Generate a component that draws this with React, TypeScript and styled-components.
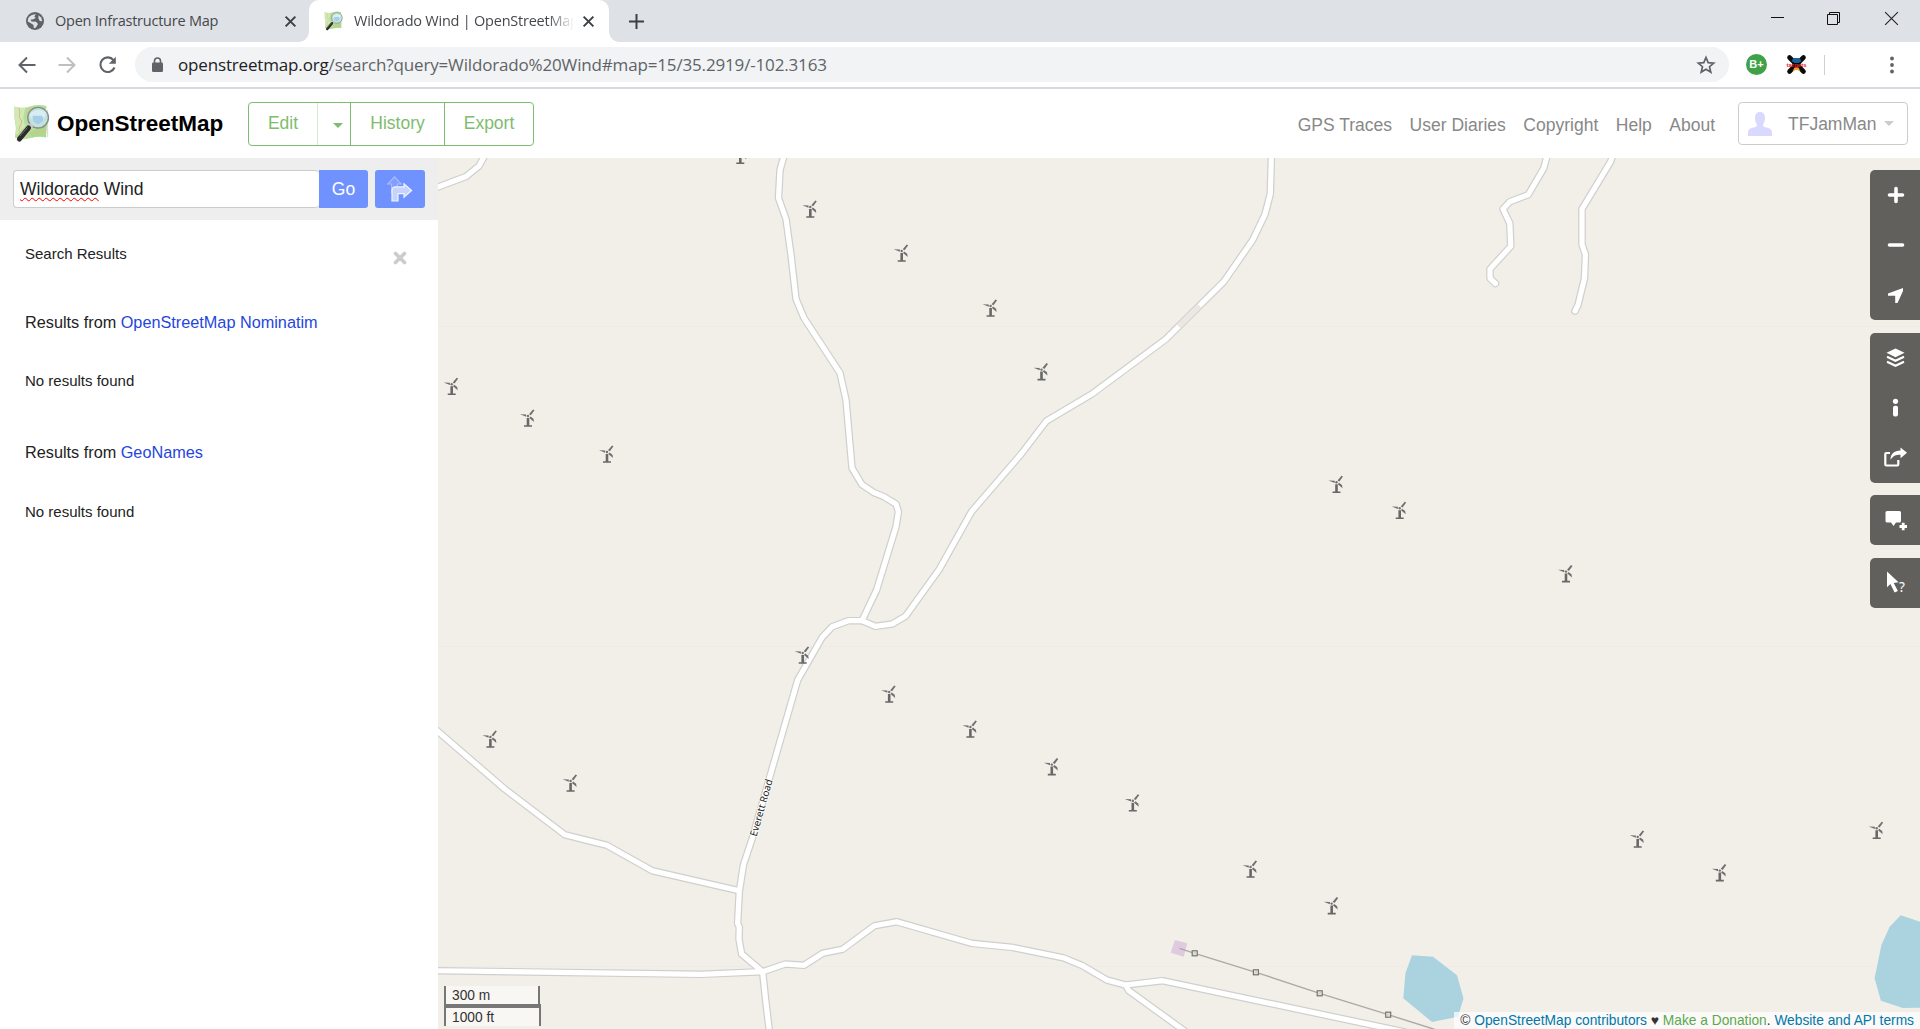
import React from "react";
import styled, { createGlobalStyle, css } from "styled-components";

const arial = `Arial, "Liberation Sans", sans-serif`;
const chrome = `"Open Sans", "Noto Sans", sans-serif`;

const GlobalStyle = createGlobalStyle`
  * { box-sizing: border-box; }
  html, body { margin: 0; padding: 0; overflow: hidden; background: #fff; }
  svg { display: block; flex: none; }
  a { text-decoration: none; }
`;

const Window = styled.div`
  width: 1920px;
  height: 1029px;
  display: flex;
  flex-direction: column;
  overflow: hidden;
  font-family: ${arial};
  color: #222;
`;

/* ---------- browser chrome ---------- */

const TabStrip = styled.div`
  height: 42px;
  flex: none;
  display: flex;
  background: #dee1e6;
`;

const Tab = styled.div<{ $active?: boolean }>`
  width: ${p => (p.$active ? 300 : 309)}px;
  height: 42px;
  padding: 0 ${p => (p.$active ? 14 : 12)}px 0 ${p => (p.$active ? 15 : 26)}px;
  display: flex;
  align-items: center;
  position: relative;
  border-radius: 10px 10px 0 0;
  background: ${p => (p.$active ? "#fff" : "transparent")};
  ${p =>
    p.$active &&
    css`
      &::before,
      &::after {
        content: "";
        position: absolute;
        bottom: 0;
        width: 10px;
        height: 10px;
      }
      &::before {
        left: -10px;
        background: radial-gradient(circle at 0 0, transparent 9.5px, #fff 10px);
      }
      &::after {
        right: -10px;
        background: radial-gradient(circle at 100% 0, transparent 9.5px, #fff 10px);
      }
    `}
`;

const TabTitle = styled.span<{ $width: number; $fade?: boolean }>`
  width: ${p => p.$width}px;
  margin-left: 11px;
  margin-right: auto;
  overflow: hidden;
  white-space: nowrap;
  font: 14.5px/20px ${chrome};
  letter-spacing: -0.23px;
  color: #45484c;
  ${p => p.$fade && "mask-image: linear-gradient(90deg, #000 88%, transparent 100%);"}
`;

const NewTab = styled.div`
  width: 54px;
  display: flex;
  align-items: center;
  justify-content: center;
`;

const WindowButtons = styled.div`
  margin-left: auto;
  display: flex;
  height: 37px;
`;

const WindowButton = styled.div`
  width: 57px;
  display: flex;
  align-items: center;
  justify-content: center;
`;

const Toolbar = styled.div`
  height: 47px;
  flex: none;
  display: flex;
  align-items: center;
  padding: 0 18px;
  background: #fff;
  border-bottom: 2px solid #d8d9df;
`;

const NavIcons = styled.div`
  width: 117px;
  display: flex;
  gap: 22px;
`;

const Omnibox = styled.div`
  width: 1594px;
  height: 35px;
  border-radius: 18px;
  background: #f1f3f4;
  display: flex;
  align-items: center;
  padding: 0 13px 0 16px;
`;

const Url = styled.span`
  margin-left: 14px;
  margin-right: auto;
  font: 17px/24px ${chrome};
  letter-spacing: -0.16px;
  color: #5f6368;
  white-space: nowrap;
  b { font-weight: 400; color: #202124; }
`;

const Extensions = styled.div`
  display: flex;
  align-items: center;
  margin-left: 17px;
  flex: 1;
  gap: 19px;
`;

const BadgeIcon = styled.span`
  width: 21px;
  height: 21px;
  border-radius: 50%;
  background: #3fa148;
  color: #fff;
  font: 700 11px/21px ${arial};
  text-align: center;
`;

const ToolbarRule = styled.span`
  width: 1px;
  height: 20px;
  margin-left: -2px;
  background: #cfd1d4;
`;

const MenuSlot = styled.span`
  margin-left: auto;
  padding-right: 8px;
`;

/* ---------- site header ---------- */

const Header = styled.header`
  height: 69px;
  flex: none;
  display: flex;
  align-items: center;
  padding: 0 12px 0 13px;
`;

const SiteName = styled.h1`
  margin: 0 0 0 7px;
  width: 191px;
  font: 700 22.5px/28px ${arial};
  color: #000;
`;

const ButtonGroup = styled.div`
  display: flex;
  height: 44px;
  width: 286px;
  border: 1px solid #7ebc6f;
  border-radius: 4px;
`;

const GroupButton = styled.a<{ $width: number; $rule?: string; $shift?: number }>`
  width: ${p => p.$width}px;
  display: flex;
  align-items: center;
  justify-content: center;
  padding-left: ${p => p.$shift || 0}px;
  font-size: 17.5px;
  color: #7ebc6f;
  border-right: ${p => (p.$rule ? `1px solid ${p.$rule}` : "0")};
`;

const Caret = styled.span<{ $color: string; $top?: number }>`
  border: 5px solid transparent;
  border-bottom: 0;
  border-top-color: ${p => p.$color};
  margin-top: ${p => p.$top || 0}px;
`;

const SecondaryNav = styled.nav`
  margin-left: auto;
  display: flex;
  gap: 17.5px;
  padding-top: 3px;
  font-size: 17.5px;
  color: #888;
`;

const UserMenu = styled.div`
  margin-left: 23px;
  width: 170px;
  height: 43px;
  border: 1px solid #ccc;
  border-radius: 4px;
  display: flex;
  align-items: center;
  padding: 0 13px 0 9px;
  font-size: 17.5px;
  color: #888;
  span:first-of-type { margin: 1px auto 0 16px; }
`;

/* ---------- content ---------- */

const Content = styled.main`
  flex: 1;
  display: flex;
  min-height: 0;
`;

const Sidebar = styled.aside`
  width: 438px;
  flex: none;
  background: #fff;
`;

const SearchForm = styled.div`
  height: 62px;
  padding: 12px 0 12px 13px;
  display: flex;
  background: #eee;
`;

const SearchInput = styled.div`
  width: 306px;
  flex: none;
  height: 38px;
  padding-left: 6px;
  border: 1px solid #ccc;
  border-right: 0;
  border-radius: 4px;
  background: #fff;
  font-size: 17.5px;
  line-height: 36px;
`;

const Misspelled = styled.span`
  text-decoration: underline wavy #f00 1.3px;
  text-underline-offset: 2px;
  text-decoration-skip-ink: none;
`;

const BlueButton = styled.div<{ $width: number; $joined?: boolean }>`
  width: ${p => p.$width}px;
  flex: none;
  height: 38px;
  margin-right: 7px;
  border-radius: ${p => (p.$joined ? "0 3px 3px 0" : "3px")};
  background: #7092ff;
  color: #fff;
  font-size: 17.5px;
  display: flex;
  align-items: center;
  justify-content: center;
`;

const Results = styled.div`
  padding: 23.5px 25px;
  display: flex;
  flex-direction: column;
`;

const ResultsHead = styled.div`
  display: flex;
  justify-content: space-between;
  height: 68px;
  padding-right: 6px;
  font-size: 15px;
  line-height: 20px;
  svg { margin-top: 7px; }
`;

const Source = styled.h4`
  margin: 0;
  height: 59.5px;
  font: 400 16.25px/20px ${arial};
  a { color: #2446de; }
`;

const Empty = styled.p`
  margin: 0;
  height: 71.3px;
  font-size: 15px;
  line-height: 20px;
`;

const MapPanel = styled.section`
  flex: 1;
  position: relative;
  background: #f2efe9;
  overflow: hidden;
`;

const Controls = styled.div`
  position: absolute;
  top: 12px;
  right: 0;
  width: 50px;
  display: flex;
  flex-direction: column;
  gap: 12.5px;
`;

const ControlGroup = styled.div`
  border-radius: 5px 0 0 5px;
  background: #61605c;
  overflow: hidden;
`;

const Control = styled.div`
  height: 50px;
  display: flex;
  align-items: center;
  justify-content: center;
  padding-left: 2px;
`;

const ScaleBox = styled.div`
  position: absolute;
  left: 6px;
  bottom: 3px;
  font-size: 13.75px;
  color: #333;
`;

const ScaleLine = styled.div<{ $width: number; $second?: boolean }>`
  width: ${p => p.$width}px;
  height: ${p => (p.$second ? 22 : 21)}px;
  margin-top: ${p => (p.$second ? -3 : 0)}px;
  padding-left: 6px;
  line-height: 19px;
  border: 2.5px solid #777;
  ${p => (p.$second ? "border-bottom: 0; border-top-width: 4px;" : "border-top: 0;")}
  background: rgba(255, 255, 255, 0.5);
`;

const Attribution = styled.div`
  position: absolute;
  right: 0;
  bottom: 0;
  height: 17px;
  padding: 0 6px;
  background: rgba(255, 255, 255, 0.7);
  font-size: 13.75px;
  line-height: 18px;
  color: #333;
  white-space: nowrap;
  a { color: #0078a8; }
  a.donate { color: #5ba94e; }
`;

/* ---------- drawings ---------- */

const OsmLogo = ({ w, h }: { w: number; h: number }) => (
  <svg width={w} height={h} viewBox="0 0 38 40">
    <path d="M1.500 2.500q8 2.500 16 0t17-.5l-1 9 1.500 10-1 13.500q-7-2-15.500.5T2 34.500l1-10-1.500-11z" fill="#b5dd9c" />
    <path d="M1.500 2.500q6 2.500 11 1.500l-2 10 2 9-9.500 9 .5-8-2-10.500z" fill="#cfeab4" />
    <path d="M24 25l10-2-.5 11q-7-2-14 .5l-2-4z" fill="#a9d98d" />
    <path d="M6 4c3 6-2 8 2 12s-5 8-1 13M17 30c4-3 6 1 9-1s5 0 8-3M18 4l-4 6" fill="none" stroke="#e3b98f" strokeWidth="1.100" />
    <path d="M35.500 6v28" stroke="#dcdedb" strokeWidth="1.200" />
    <circle cx="25.800" cy="14" r="10.600" fill="#c3e2dc" stroke="#858d8a" strokeWidth="1.400" />
    <path d="M17.500 9.500q8-6 16.500-1l-1 5-15 1z" fill="#d8edf1" />
    <path d="M20 12h10l1 5-5 4-5-3z" fill="#a6cdea" />
    <path d="M15.500 21.500l2.500-2 3.200 3-2.200 2.200z" fill="#c9c9c9" />
    <path d="M16 24.500L6.500 36" stroke="#2c2a2a" strokeWidth="5" strokeLinecap="round" />
    <path d="M15 24L7 33" stroke="#77706e" strokeWidth="1" />
  </svg>
);

const Cross = ({ size, color, weight }: { size: number; color: string; weight: number }) => (
  <svg width={size} height={size} viewBox="0 0 12 12">
    <path d="M1.500 1.500l9 9M10.500 1.500l-9 9" stroke={color} strokeWidth={weight} />
  </svg>
);

const Globe = () => (
  <svg width="18" height="18" viewBox="0 0 18 18">
    <circle cx="9" cy="9" r="9" fill="#5f6368" />
    <path d="M3.200 4.800Q6 1.800 9.800 2.200L8.300 4.500l1.400 1.300L7.500 7.300l-3 .4 1 1.800 4.500.3 2 2.200-1.500 2.500Q9.500 16.500 7.800 16L7.500 13 4.500 11 1.800 9.500Q1.500 6.800 3.200 4.800z" fill="#dee1e6" />
    <path d="M12.500 3.200l2.700 2.300 1 3.700-2.400-.2-1.300-2.500z" fill="#dee1e6" />
  </svg>
);

const Arrow = ({ color, flip }: { color: string; flip?: boolean }) => (
  <svg width="18" height="18" viewBox="0 0 18 18">
    <path d={flip ? "M.5 9H16M9 1.500L16.500 9 9 16.500" : "M17.500 9H2M9 1.500L1.500 9 9 16.500"} fill="none" stroke={color} strokeWidth="2" />
  </svg>
);

const Reload = () => (
  <svg width="20" height="18" viewBox="0 0 20 18">
    <path d="M15.500 4.200A7.300 7.300 0 1 0 16.500 11.500" fill="none" stroke="#5f6368" strokeWidth="2.100" />
    <path d="M17.800 .800v7h-7z" fill="#5f6368" />
  </svg>
);

const Lock = () => (
  <svg width="13" height="16" viewBox="0 0 13 16">
    <path d="M3.500 6V4a3 3 0 0 1 6 0v2" fill="none" stroke="#5f6368" strokeWidth="1.600" />
    <rect x="1" y="5.500" width="11" height="9.500" rx="1.300" fill="#5f6368" />
  </svg>
);

const Star = () => (
  <svg width="20" height="20" viewBox="0 0 20 20">
    <path d="M10 2.500l2.200 5.100 5.500.5-4.200 3.600 1.300 5.400L10 14.200l-4.800 2.900 1.300-5.400L2.300 8.100l5.500-.5z" fill="none" stroke="#5f6368" strokeWidth="1.700" />
  </svg>
);

const TargetIcon = () => (
  <svg width="21" height="21" viewBox="0 0 21 21">
    <path d="M3.500 3.500l14 14M17.500 3.500l-14 14" stroke="#0b0b0b" strokeWidth="4.600" strokeLinecap="round" />
    <path d="M6.500 7.500h8v6h-8z" fill="#0b0b0b" />
    <path d="M7.500 4h6l2 3.200L12.500 9h-4L5.500 7z" fill="#1a5f96" />
    <path d="M6.500 17.500l2-4h4l2 4-3-1.500h-2z" fill="#f1a32b" />
    <text x="10.500" y="12.600" fontFamily="Liberation Sans" fontWeight="700" fontSize="6" fill="#e8202b" textAnchor="middle">targets</text>
  </svg>
);

const Dots = () => (
  <svg width="4" height="18" viewBox="0 0 4 18" fill="#5f6368">
    <circle cx="2" cy="2.500" r="1.900" />
    <circle cx="2" cy="9" r="1.900" />
    <circle cx="2" cy="15.500" r="1.900" />
  </svg>
);

const Avatar = () => (
  <svg width="24" height="24" viewBox="0 0 24 24">
    <path d="M12 0c3.500 0 5 2.500 5 6 0 3-.8 5-2 6.500 0 1.500.5 2.300 2 2.700 4 .5 7 1.500 7 5.500V24H0v-3.300c0-4 3-5 7-5.500 1.500-.4 2-1.200 2-2.700C7.800 11 7 9 7 6c0-3.500 1.500-6 5-6z" fill="#d9d9ff" />
  </svg>
);

const Directions = () => (
  <svg width="26" height="26" viewBox="0 0 26 26">
    <path d="M4.600 17V8H.8L7.500.8 14.200 8H10.400v3" fill="#829fff" stroke="#a9bcff" strokeWidth="1.100" />
    <path d="M5 25V14.500q0-3.700 3.700-3.700H17V7.800l7.600 6.700L17 21.100v-3.500h-6V25z" fill="#c6d3ff" stroke="#f0f4ff" strokeWidth="1.200" />
  </svg>
);

const Pane = ({ children }: { children: React.ReactNode }) => (
  <svg width="24" height="24" viewBox="0 0 24 24" fill="#fff">{children}</svg>
);

const roads = {
  northWest: "438,187 466,176.500 479,166 485,155",
  north: "785,152 780,170 778.500,198 786,219 791,255 796,299 804,318 840,373 846,400 852,468 862,484.700 874,492.700 884,496.700 896,504 898.400,511.700 896,526.700 876.600,590 862,620.700",
  everett: "1271.500,152 1270.300,194 1265,214.300 1252.900,239.700 1223.800,281.700 1165.600,339.300 1091.500,394.300 1046.400,421 1021.200,454 971.500,511.700 939.300,569.300 905.700,616 892.300,624 875.400,626.300 862,620.700 848.300,620.700 832.200,626.700 822.200,637.300 797.700,680 768.400,781.700 752.300,838.300 743.400,865 739.300,891.700 737.600,923.300 739.300,927 739,939 741.600,954 762.600,971.700 766,1003 769.500,1032",
  west: "434,728 505,789.300 564.800,834.700 606.800,845.300 652.300,870.700 739.300,890.700",
  south: "434,970.700 701.400,974.300 762.600,971.700 785.300,964 804,965.300 822.800,953.300 842.500,949.300 874.600,925.700 896.500,921.700 971.500,943.300 1011.700,947.300 1063,957.700 1081.800,965.300 1106.800,980 1125.500,985 1162.800,980.700 1405,1032",
  spur: "1125.500,985 1128.800,990.700 1186,1032",
  eastA: "1548,152 1543.700,168.300 1528.200,194.700 1509.800,201.700 1503,209 1509.800,223.300 1510.800,246.300 1490,269 1490,278.300 1495.500,283.500",
  eastB: "1614,152 1610.600,161.700 1582,209 1582,244.300 1585.400,254.300 1584.500,278.300 1578,305 1575,311",
};

const turbines: [number, number][] = [
  [740.3, 164], [810.3, 217.7], [901.7, 261.7], [990.6, 316.7], [1041.5, 380.3],
  [451.7, 395], [528, 426.7], [607, 462.7], [1336.5, 493], [1399.7, 519],
  [1566, 582.3], [802.7, 663.7], [889.2, 702.7], [970.4, 737.7], [1051.8, 775.3],
  [1132.8, 811.5], [1250.6, 877.7], [1331.7, 914.3], [1637.7, 847.7],
  [1719.8, 881.3], [1876.7, 839], [490.4, 747.7], [570.6, 791.7],
];

const towers: [number, number][] = [[1194.7, 953.3], [1255.9, 972.3], [1319.7, 993.3], [1388.2, 1014.7]];

const MapDrawing = () => (
  <svg width="1482" height="871" viewBox="438 158 1482 871">
    <defs>
      <g id="turbine">
        <path d="M-1.300-8.800h2.600V-1.500H4V.1h-8v-1.600h2.700z" fill="#686868" />
        <circle cy="-10.700" r="1.200" fill="#707070" />
        <path d="M-8-12.500l6.200.2v2.300z M1-12.500L5-17.200 6.500-16.400 2.900-11.400z M1.300-8.800L6-4.800 5.500-8 2.500-10.200z" fill="#707070" />
      </g>
    </defs>
    <path d="M438 326.500H1920M438 646.500H1920M438 966.500H1920" stroke="#eeece8" strokeWidth="1" />
    <path d="M1412 955.300l21 1.400 24 18.600 6.500 23-5.500 18.400-26 5.300-28.700-23.700 2.100-25z" fill="#aad3df" />
    <path d="M1900.700 915.300L1920 921.700v86l-17.200.3-21.900-7.300-6.300-22.400 6.800-33.300 8.300-18.300z" fill="#aad3df" />
    <path d="M1175 940l12.300 3.300-3.600 13.400-13.100-4z" fill="#dfcbdf" />
    {[["#cfcfcd", 7.6], ["#ffffff", 5.2]].map(([stroke, width]) => (
      <g key={stroke} fill="none" stroke={stroke as string} strokeWidth={width} strokeLinejoin="round" strokeLinecap="round">
        {Object.entries(roads).map(([name, points]) => <polyline key={name} points={points} />)}
      </g>
    ))}
    <path d="M1199.500 305.800L1178.700 326.400" stroke="#ebe8e3" strokeWidth="5.400" />
    <path d="M1179.500 948.300L1194.700 953.300 1255.900 972.300 1319.700 993.300 1388.200 1014.700 1435 1029.500" fill="none" stroke="#acaaa6" strokeWidth="1.400" />
    {towers.map(([x, y]) => (
      <g key={x} transform={`translate(${x} ${y})`}>
        <rect x="-2.500" y="-2.500" width="5" height="5" fill="#eeebe5" stroke="#74736f" strokeWidth="1.200" />
        <path d="M-1.500-1.500l3 3M1.500-1.500l-3 3" stroke="#bbb" strokeWidth=".700" />
      </g>
    ))}
    {turbines.map(([x, y]) => <use key={x} href="#turbine" x={x} y={y} />)}
    <text transform="translate(756.500 837) rotate(-74)" fontFamily="Noto Sans" fontSize="10" fill="#222" stroke="#fff" strokeWidth="1.500" paintOrder="stroke" textLength="59">Everett Road</text>
  </svg>
);

export default function App() {
  return (
    <Window>
      <GlobalStyle />
      <TabStrip>
        <Tab>
          <Globe />
          <TabTitle $width={190}>Open Infrastructure Map</TabTitle>
          <Cross size={13} color="#3c4043" weight={1.8} />
        </Tab>
        <Tab $active>
          <OsmLogo w={19} h={20} />
          <TabTitle $width={220} $fade>Wildorado Wind | OpenStreetMap</TabTitle>
          <Cross size={13} color="#3c4043" weight={1.8} />
        </Tab>
        <NewTab>
          <svg width="15" height="15" viewBox="0 0 15 15"><path d="M7.500 0v15M0 7.500h15" stroke="#3c4043" strokeWidth="2" /></svg>
        </NewTab>
        <WindowButtons>
          <WindowButton>
            <svg width="13" height="13" viewBox="0 0 13 13"><path d="M0 5.500h13" stroke="#111" /></svg>
          </WindowButton>
          <WindowButton>
            <svg width="15" height="13" viewBox="0 0 15 13"><path d="M.5 2.500h10v10h-10zM2.500 2.500V.5h10v10h-2" fill="none" stroke="#111" /></svg>
          </WindowButton>
          <WindowButton><Cross size={17} color="#222" weight={0.8} /></WindowButton>
        </WindowButtons>
      </TabStrip>
      <Toolbar>
        <NavIcons>
          <Arrow color="#5f6368" />
          <Arrow color="#bdc0c3" flip />
          <Reload />
        </NavIcons>
        <Omnibox>
          <Lock />
          <Url><b>openstreetmap.org</b>/search?query=Wildorado%20Wind#map=15/35.2919/-102.3163</Url>
          <Star />
        </Omnibox>
        <Extensions>
          <BadgeIcon>B+</BadgeIcon>
          <TargetIcon />
          <ToolbarRule />
          <MenuSlot><Dots /></MenuSlot>
        </Extensions>
      </Toolbar>
      <Header>
        <OsmLogo w={37} h={39} />
        <SiteName>OpenStreetMap</SiteName>
        <ButtonGroup>
          <GroupButton $width={69} $rule="#d8ebd3">Edit</GroupButton>
          <GroupButton $width={33} $rule="#7ebc6f" $shift={8}><Caret $color="#7ebc6f" $top={3} /></GroupButton>
          <GroupButton $width={94} $rule="#7ebc6f">History</GroupButton>
          <GroupButton $width={88}>Export</GroupButton>
        </ButtonGroup>
        <SecondaryNav>
          <span>GPS Traces</span>
          <span>User Diaries</span>
          <span>Copyright</span>
          <span>Help</span>
          <span>About</span>
        </SecondaryNav>
        <UserMenu>
          <Avatar />
          <span>TFJamMan</span>
          <Caret $color="#ccc" />
        </UserMenu>
      </Header>
      <Content>
        <Sidebar>
          <SearchForm>
            <SearchInput><Misspelled>Wildorado</Misspelled> Wind</SearchInput>
            <BlueButton $width={49} $joined>Go</BlueButton>
            <BlueButton $width={50}><Directions /></BlueButton>
          </SearchForm>
          <Results>
            <ResultsHead>
              <span>Search Results</span>
              <svg width="14" height="14" viewBox="0 0 14 14"><path d="M2.500 2.500l9 9M11.500 2.500l-9 9" stroke="#ccc" strokeWidth="3.600" strokeLinecap="round" /></svg>
            </ResultsHead>
            <Source>Results from <a>OpenStreetMap Nominatim</a></Source>
            <Empty>No results found</Empty>
            <Source>Results from <a>GeoNames</a></Source>
            <Empty>No results found</Empty>
          </Results>
        </Sidebar>
        <MapPanel>
          <MapDrawing />
          <Controls>
            <ControlGroup>
              <Control><Pane><path d="M12 5.500v13M5.500 12h13" stroke="#fff" strokeWidth="3.600" strokeLinecap="round" /></Pane></Control>
              <Control><Pane><path d="M5.500 12h13" stroke="#fff" strokeWidth="3.600" strokeLinecap="round" /></Pane></Control>
              <Control><Pane><path d="M19 5L4 10.500v2.300h7.200V20h2.300l5.500-12z" /></Pane></Control>
            </ControlGroup>
            <ControlGroup>
              <Control>
                <Pane>
                  <path d="M11.500 2.500l9 4.200-9 4.500-9-4.500z" />
                  <path d="M3 10.800l8.500 4 8.500-4M3 15.800l8.500 4 8.500-4" fill="none" stroke="#fff" strokeWidth="2.100" />
                </Pane>
              </Control>
              <Control><Pane><circle cx="11.500" cy="5.300" r="2.600" /><rect x="9" y="9.800" width="5" height="10.700" rx="2" /></Pane></Control>
              <Control>
                <Pane>
                  <path d="M6 7H2.300Q1.300 7 1.300 8v10.500q0 1 1 1h11q1 0 1-1V14" fill="none" stroke="#fff" strokeWidth="2.200" />
                  <path d="M16.500 1.500l6.500 5.300-6.500 5.500V8.800C11.500 8.800 9 10 6.500 14 6.500 8 10 4.500 16.500 4.500z" />
                </Pane>
              </Control>
            </ControlGroup>
            <ControlGroup>
              <Control>
                <Pane>
                  <path d="M3 3h12.500q1.500 0 1.500 1.500V13q0 1.500-1.500 1.500H12L9.500 18 7 14.500H3.200Q1.500 14.500 1.500 13V4.500Q1.500 3 3 3z" />
                  <path d="M19.200 14.800v7.400M15.500 18.500h7.500" stroke="#fff" strokeWidth="2.800" />
                </Pane>
              </Control>
            </ControlGroup>
            <ControlGroup>
              <Control>
                <Pane>
                  <path d="M3 .500v15.800l3.400-3.200 4.200 8.500 3.300-1.600-4.200-8 4.800-.700z" />
                  <text x="15" y="21" fontFamily="Noto Sans" fontSize="13.500" fill="#fff">?</text>
                </Pane>
              </Control>
            </ControlGroup>
          </Controls>
          <ScaleBox>
            <ScaleLine $width={96}>300 m</ScaleLine>
            <ScaleLine $width={97} $second>1000 ft</ScaleLine>
          </ScaleBox>
          <Attribution>
            © <a>OpenStreetMap contributors</a> ♥ <a className="donate">Make a Donation</a>. <a>Website and API terms</a>
          </Attribution>
        </MapPanel>
      </Content>
    </Window>
  );
}
